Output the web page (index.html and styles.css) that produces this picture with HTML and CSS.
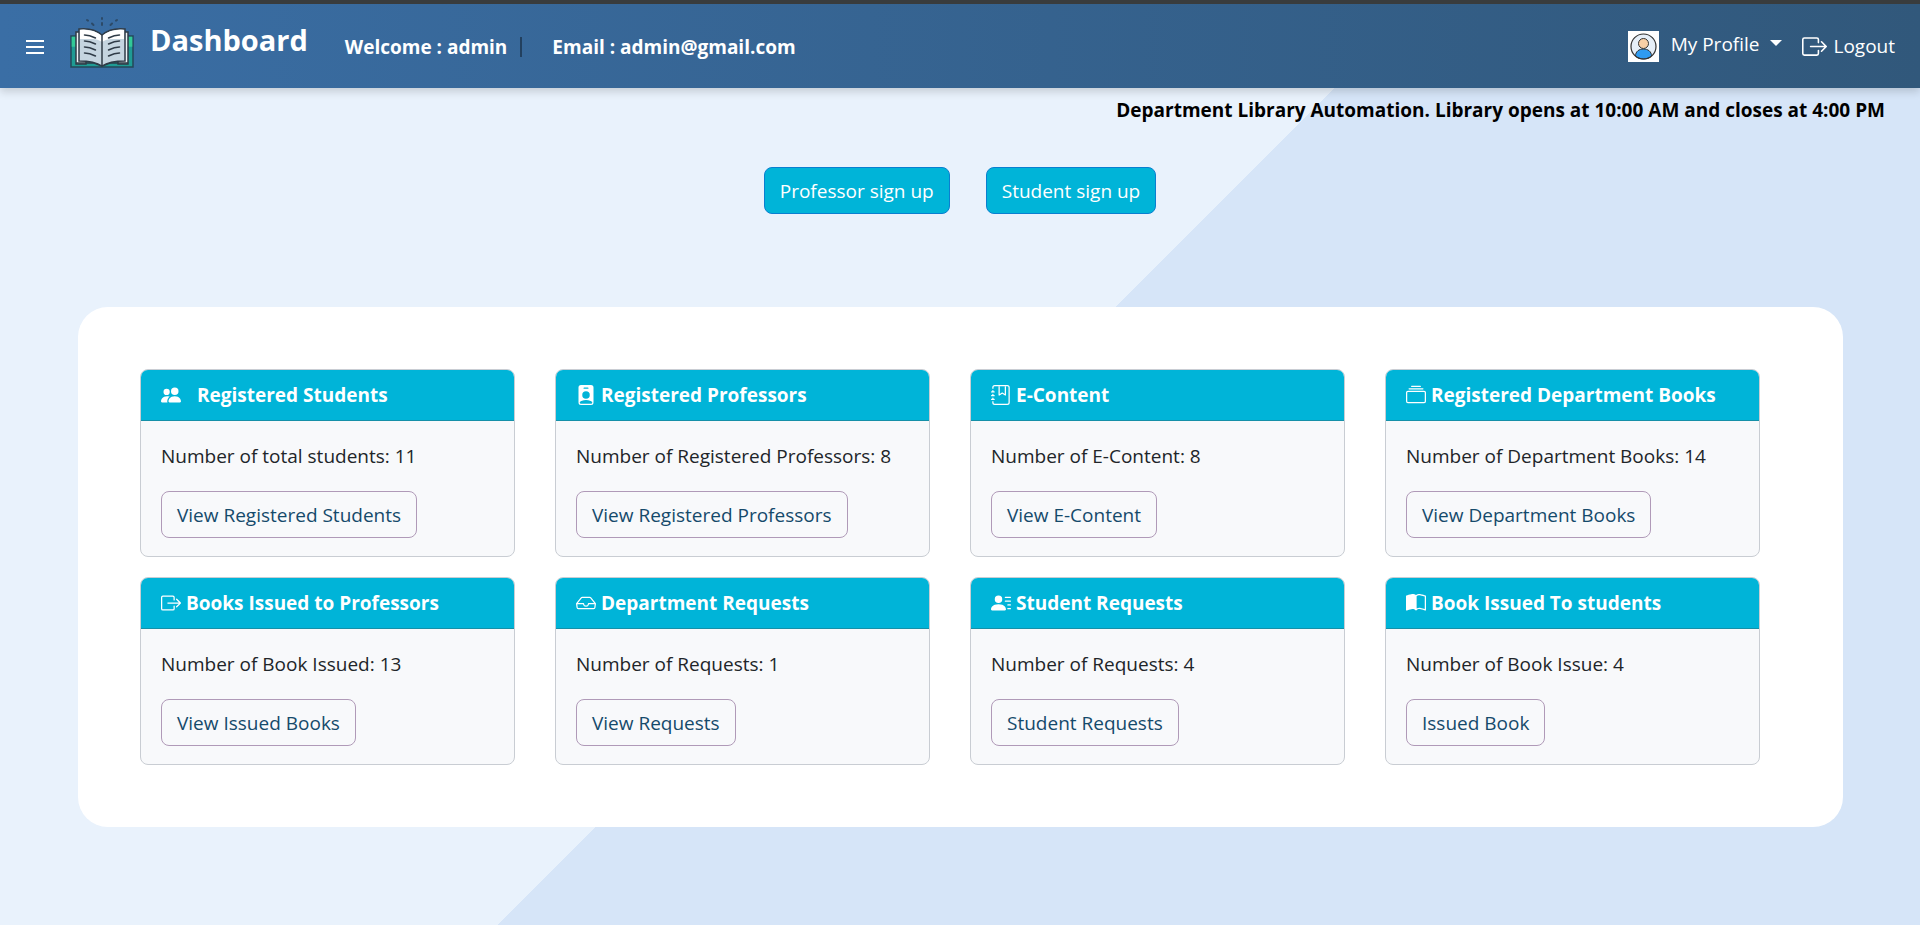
FILE: index.html
```html
<!DOCTYPE html>
<html lang="en">
<head>
<meta charset="utf-8">
<meta name="viewport" content="width=device-width, initial-scale=1">
<title>Dashboard</title>
<link rel="stylesheet" href="styles.css">
</head>
<body>
<header class="navbar">
  <button class="menu-btn" type="button" aria-label="Open menu">
    <svg width="18" height="16" viewBox="0 0 18 16" fill="#fff"><path d="M0 1h18v2H0zM0 7h18v2H0zM0 13h18v2H0z"/></svg>
  </button>
  <svg class="logo" width="64" height="52" viewBox="0 0 64 52" aria-hidden="true">
    <g stroke="#2c4a68" stroke-width="2" stroke-linecap="round"><path d="M32 2v1M32 7v2M17 4l1 .6M22 7.500l1.500 1.500M47 4l-1 .6M42 7.500l-1.500 1.500"/></g>
    <path d="M1 20h62v31H1z" fill="#1f9b94" stroke="#25485a" stroke-width="1.500"/>
    <path d="M1.700 20.700h4v10h-4zM58.300 20.700h4v10h-4z" fill="#32c997"/>
    <path d="M6 16h10v32H6zM48 16h10v32H48z" fill="#eef3f7" stroke="#2f3b47" stroke-width="1.500"/>
    <path d="M6 47h18l8 3 8-3h18" fill="none" stroke="#2f3b47" stroke-width="1.500"/>
    <path d="M9 13c8-1 17 1 23 6 6-5 15-7 23-6v32c-9 0-17 1-23 5-6-4-14-5-23-5z" fill="#c5d5e0" stroke="#2f3b47" stroke-width="1.500"/>
    <path d="M10 14c8-1 16 1 22 6v6c-3-2-6-3-9-3H10zM54 14c-8-1-16 1-22 6v6c3-2 6-3 9-3h13z" fill="#fff"/>
    <path d="M32 19v31" stroke="#2f3b47" stroke-width="1.500"/>
    <g stroke="#2f3b47" stroke-width="1.500" stroke-linecap="round" fill="none"><path d="M14.500 19c4 0 7 1 11 3M14.500 25c4 0 7 1 11 3M14.500 31c4 0 7 1 11 3M14.500 37c4 0 7 1 11 3M49.500 19c-4 0-7 1-11 3M49.500 25c-4 0-7 1-11 3M49.500 31c-4 0-7 1-11 3M49.500 37c-4 0-7 1-11 3"/></g>
  </svg>
  <h1 class="brand">Dashboard</h1>
  <p class="session"><strong>Welcome : admin</strong><span class="divider"></span><strong>Email : admin@gmail.com</strong></p>
  <nav class="account">
    <svg class="avatar" width="31" height="31" viewBox="0 0 31 31" aria-hidden="true">
      <path d="M0 0h31v31H0z" fill="#fff"/>
      <circle cx="15.500" cy="15.500" r="12.500" fill="#e6eff8"/>
      <path d="M7.500 25c0-4.500 3.500-7 8-7s8 2.500 8 7c-4 4-12 4-16 0z" fill="#2f9bf0" stroke="#333" />
      <circle cx="15.500" cy="12.500" r="5" fill="#f7cfa6" stroke="#333"/>
      <circle cx="15.500" cy="15.500" r="12.500" fill="none" stroke="#333" stroke-width="1.200"/>
    </svg>
    <button class="profile" type="button">My Profile<svg width="12" height="6" viewBox="0 0 12 6" fill="#fff"><path d="M0 0h12L6 6z"/></svg></button>
    <a class="logout" href="#"><svg width="25" height="25" viewBox="0 0 16 16" fill="currentColor"><path fill-rule="evenodd" d="M10 12.500a.5.5 0 0 1-.5.5h-8a.5.5 0 0 1-.5-.5v-9a.5.5 0 0 1 .5-.5h8a.5.5 0 0 1 .5.5v2a.5.5 0 0 0 1 0v-2A1.500 1.500 0 0 0 9.500 2h-8A1.500 1.500 0 0 0 0 3.500v9A1.500 1.500 0 0 0 1.500 14h8a1.500 1.500 0 0 0 1.500-1.500v-2a.5.5 0 0 0-1 0z"/><path fill-rule="evenodd" d="M15.854 8.354a.5.5 0 0 0 0-.708l-3-3a.5.5 0 0 0-.708.708L14.293 7.500H5.500a.5.5 0 0 0 0 1h8.793l-2.147 2.146a.5.5 0 0 0 .708.708z"/></svg>Logout</a>
  </nav>
</header>
<p class="notice">Department Library Automation. Library opens at 10:00 AM and closes at 4:00 PM</p>
<div class="signup">
  <a class="btn btn-solid" href="#">Professor sign up</a>
  <a class="btn btn-solid" href="#">Student sign up</a>
</div>
<main class="panel">
  <section class="card">
    <h2 class="card-head card-head-wide"><svg class="icon" viewBox="0 0 16 16"><path d="M7 14s-1 0-1-1 1-4 5-4 5 3 5 4-1 1-1 1zm4-6a3 3 0 1 0 0-6 3 3 0 0 0 0 6M5.216 14A2.240 2.240 0 0 1 5 13c0-1.355.68-2.750 1.936-3.720A6.300 6.300 0 0 0 5 9c-4 0-5 3-5 4s1 1 1 1zM4.500 8a2.500 2.500 0 1 0 0-5 2.500 2.500 0 0 0 0 5"/></svg>Registered Students</h2>
    <div class="card-body"><p>Number of total students: 11</p><a class="btn btn-line" href="#">View Registered Students</a></div>
  </section>
  <section class="card">
    <h2 class="card-head"><svg class="icon" viewBox="0 0 16 16"><path d="M2 2a2 2 0 0 1 2-2h8a2 2 0 0 1 2 2v12a2 2 0 0 1-2 2H4a2 2 0 0 1-2-2zm4.500 0a.5.5 0 0 0 0 1h3a.5.5 0 0 0 0-1zM8 11a3 3 0 1 0 0-6 3 3 0 0 0 0 6m5 2.755C12.146 12.825 10.623 12 8 12s-4.146.826-5 1.755V14a1 1 0 0 0 1 1h8a1 1 0 0 0 1-1z"/></svg>Registered Professors</h2>
    <div class="card-body"><p>Number of Registered Professors: 8</p><a class="btn btn-line" href="#">View Registered Professors</a></div>
  </section>
  <section class="card">
    <h2 class="card-head"><svg class="icon" viewBox="0 0 16 16"><path d="M6 8V1h1v6.117L8.743 6.070a.5.5 0 0 1 .514 0L11 7.117V1h1v7a.5.5 0 0 1-.757.429L9 7.083 6.757 8.430A.5.5 0 0 1 6 8"/><path d="M3 0h10a2 2 0 0 1 2 2v12a2 2 0 0 1-2 2H3a2 2 0 0 1-2-2v-1h1v1a1 1 0 0 0 1 1h10a1 1 0 0 0 1-1V2a1 1 0 0 0-1-1H3a1 1 0 0 0-1 1v1H1V2a2 2 0 0 1 2-2"/><path d="M1 5v-.5a.5.5 0 0 1 1 0V5h.5a.5.5 0 0 1 0 1h-2a.5.5 0 0 1 0-1zm0 3v-.5a.5.5 0 0 1 1 0V8h.5a.5.5 0 0 1 0 1h-2a.5.5 0 0 1 0-1zm0 3v-.5a.5.5 0 0 1 1 0v.5h.5a.5.5 0 0 1 0 1h-2a.5.5 0 0 1 0-1z"/></svg>E-Content</h2>
    <div class="card-body"><p>Number of E-Content: 8</p><a class="btn btn-line" href="#">View E-Content</a></div>
  </section>
  <section class="card">
    <h2 class="card-head"><svg class="icon" viewBox="0 0 16 16"><path d="M2.500 3.500a.5.5 0 0 1 0-1h11a.5.5 0 0 1 0 1zm2-2a.5.5 0 0 1 0-1h7a.5.5 0 0 1 0 1zM0 13a1.500 1.500 0 0 0 1.500 1.500h13A1.500 1.500 0 0 0 16 13V6a1.500 1.500 0 0 0-1.500-1.500h-13A1.500 1.500 0 0 0 0 6zm1.500.5A.5.5 0 0 1 1 13V6a.5.5 0 0 1 .5-.5h13a.5.5 0 0 1 .5.5v7a.5.5 0 0 1-.5.5z"/></svg>Registered Department Books</h2>
    <div class="card-body"><p>Number of Department Books: 14</p><a class="btn btn-line" href="#">View Department Books</a></div>
  </section>
  <section class="card">
    <h2 class="card-head"><svg class="icon" viewBox="0 0 16 16"><path fill-rule="evenodd" d="M10 12.500a.5.5 0 0 1-.5.5h-8a.5.5 0 0 1-.5-.5v-9a.5.5 0 0 1 .5-.5h8a.5.5 0 0 1 .5.5v2a.5.5 0 0 0 1 0v-2A1.500 1.500 0 0 0 9.500 2h-8A1.500 1.500 0 0 0 0 3.500v9A1.500 1.500 0 0 0 1.500 14h8a1.500 1.500 0 0 0 1.500-1.500v-2a.5.5 0 0 0-1 0z"/><path fill-rule="evenodd" d="M15.854 8.354a.5.5 0 0 0 0-.708l-3-3a.5.5 0 0 0-.708.708L14.293 7.500H5.500a.5.5 0 0 0 0 1h8.793l-2.147 2.146a.5.5 0 0 0 .708.708z"/></svg>Books Issued to Professors</h2>
    <div class="card-body"><p>Number of Book Issued: 13</p><a class="btn btn-line" href="#">View Issued Books</a></div>
  </section>
  <section class="card">
    <h2 class="card-head"><svg class="icon" viewBox="0 0 16 16"><path d="M4.980 4a.5.5 0 0 0-.39.188L1.540 8H6a.5.5 0 0 1 .5.5 1.500 1.500 0 1 0 3 0A.5.5 0 0 1 10 8h4.460l-3.050-3.812A.5.5 0 0 0 11.020 4zm9.954 5H10.450a2.500 2.500 0 0 1-4.900 0H1.066l.32 2.562a.5.5 0 0 0 .497.438h12.234a.5.5 0 0 0 .496-.438zM3.809 3.563A1.500 1.500 0 0 1 4.981 3h6.038a1.500 1.500 0 0 1 1.172.563l3.700 4.625a.5.5 0 0 1 .105.374l-.39 3.124A1.500 1.500 0 0 1 14.117 13H1.883a1.500 1.500 0 0 1-1.489-1.314l-.39-3.124a.5.5 0 0 1 .106-.374z"/></svg>Department Requests</h2>
    <div class="card-body"><p>Number of Requests: 1</p><a class="btn btn-line" href="#">View Requests</a></div>
  </section>
  <section class="card">
    <h2 class="card-head"><svg class="icon" viewBox="0 0 16 16"><path d="M6 8a3 3 0 1 0 0-6 3 3 0 0 0 0 6m-5 6s-1 0-1-1 1-4 6-4 6 3 6 4-1 1-1 1zM11 3.500a.5.5 0 0 1 .5-.5h4a.5.5 0 0 1 0 1h-4a.5.5 0 0 1-.5-.5m.5 2.500a.5.5 0 0 0 0 1h4a.5.5 0 0 0 0-1zm2 3a.5.5 0 0 0 0 1h2a.5.5 0 0 0 0-1zm0 3a.5.5 0 0 0 0 1h2a.5.5 0 0 0 0-1z"/></svg>Student Requests</h2>
    <div class="card-body"><p>Number of Requests: 4</p><a class="btn btn-line" href="#">Student Requests</a></div>
  </section>
  <section class="card">
    <h2 class="card-head"><svg class="icon" viewBox="0 0 16 16"><path d="M8.500 2.687c.654-.689 1.782-.886 3.112-.752 1.234.124 2.503.523 3.388.893v9.923c-.918-.35-2.107-.692-3.287-.81-1.094-.111-2.278-.039-3.213.492zM8 1.783C7.015.936 5.587.81 4.287.94c-1.514.153-3.042.672-3.994 1.105A.5.5 0 0 0 0 2.500v11a.5.5 0 0 0 .707.455c.882-.4 2.303-.881 3.680-1.020 1.409-.142 2.590.087 3.223.877a.5.5 0 0 0 .78 0c.633-.79 1.814-1.019 3.222-.877 1.378.139 2.800.62 3.681 1.020A.5.5 0 0 0 16 13.500v-11a.5.5 0 0 0-.293-.455c-.952-.433-2.480-.952-3.994-1.105C10.413.809 8.985.936 8 1.783"/></svg>Book Issued To students</h2>
    <div class="card-body"><p>Number of Book Issue: 4</p><a class="btn btn-line" href="#">Issued Book</a></div>
  </section>
</main>
</body>
</html>
```
FILE: styles.css
```css
* { box-sizing: border-box; }
body {
  margin: 0;
  min-height: 100vh;
  font-family: "Open Sans", "Noto Sans", sans-serif;
  font-size: 19px;
  line-height: 30px;
  color: #212529;
  background: linear-gradient(135deg, #e9f2fc 50%, #d6e5f8 50%);
}
h1, h2, p { margin: 0; }
a { text-decoration: none; }
button { font: inherit; color: inherit; background: none; border: 0; padding: 0; }

.navbar {
  display: flex;
  align-items: center;
  min-height: 88px;
  padding: 0 25px 0 26px;
  border-top: 4px solid #393c3d;
  color: #fff;
  background: linear-gradient(90deg, #3a6ea5, #31587b);
  box-shadow: 0 4px 8px rgba(0, 0, 0, 0.15);
}
.menu-btn { display: flex; padding-top: 2px; }
.logo { margin: 0 16px 8px 26px; }
.brand { font-size: 29px; line-height: 40px; padding-bottom: 12px; }
.session { display: flex; align-items: center; margin-left: 37px; padding-top: 2px; }
.divider { width: 2px; height: 20px; margin: 0 30px 0 13px; background: #22405f; }
.account { display: flex; align-items: center; margin-left: auto; }
.profile { display: flex; align-items: center; gap: 11px; margin: 0 20px 4px 12px; }
.profile svg { margin-bottom: 2px; }
.logout { display: flex; align-items: center; gap: 6px; color: #fff; }

.notice { padding: 7px 35px 0; text-align: right; font-weight: 700; color: #000; }
.signup { display: flex; justify-content: center; gap: 36px; padding: 42px 0 93px; }

.btn { display: inline-block; padding: 8px 15px 7px; border: 1px solid; border-radius: 8px; }
.btn-solid { color: #fff; background: #00b4d8; border-color: #0a7fd0; }
.btn-line { color: #154a6b; border-color: #b09ab8; }

.panel {
  display: grid;
  grid-template-columns: repeat(4, 1fr);
  gap: 20px 40px;
  margin: 0 77px 0 78px;
  padding: 62px 83px 62px 62px;
  border-radius: 30px;
  background: #fff;
}
.card { overflow: hidden; border: 1px solid #c9cdd3; border-radius: 8px; background: #f8f9fb; }
.card-head {
  display: flex;
  align-items: center;
  gap: 5px;
  padding: 10px 20px;
  border-bottom: 1px solid #1590a8;
  font-size: 19px;
  line-height: 30px;
  color: #fff;
  background: #00b4d8;
}
.card-head-wide { gap: 16px; }
.icon { width: 20px; height: 20px; fill: currentColor; flex: none; }
.card-body { display: flex; flex-direction: column; align-items: flex-start; gap: 20px; padding: 20px 20px 18px; }
```
